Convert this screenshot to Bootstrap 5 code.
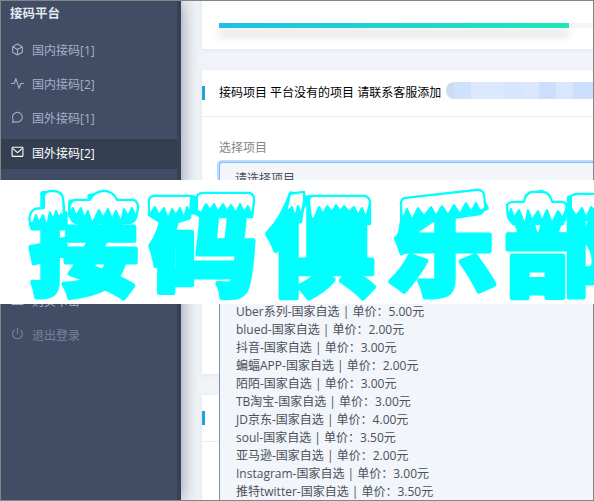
<!DOCTYPE html>
<html lang="zh-CN">
<head>
<meta charset="utf-8">
<meta name="viewport" content="width=device-width, initial-scale=1">
<title>接码平台</title>
<link rel="stylesheet" href="https://cdn.jsdelivr.net/npm/bootstrap@5.3.0/dist/css/bootstrap.min.css">
<style>
body{font:12px/18px "Open Sans","Noto Sans CJK SC",sans-serif;background:#f1f5f9;color:#4b5059}
.app{width:594px;height:501px}
.frame{inset:0;border:1px solid #858585;z-index:3;pointer-events:none}
.side{width:181px;background:#414d65;border-right:4px solid #364156;box-shadow:0 0 18px rgba(65,77,101,.6);z-index:1;color:#a6b1c8}
.brand{height:36px;padding:5px 0 0 10px;font-weight:700;color:#e4e9f2;font-size:12.5px}
.item{height:30px;margin-bottom:4.2px;padding-left:11px;gap:8px;color:#a6b1c8}
.item svg{width:13px;height:13px;fill:none;stroke:currentColor;stroke-width:2;stroke-linecap:round;stroke-linejoin:round;position:relative;top:-2px}
.item.current{background:#343e51;color:#fff}
.item.dim{color:#77839a}
.hidden-gap{height:114px}
.main{padding-left:21px}
.panel{background:#fff;box-shadow:0 1px 5px rgba(60,80,110,.08)}
.p-top{height:49px;padding:23px 0 0 17px}
.p-mid{height:304px;margin-top:21px}
.p-end{height:106px;margin-top:21px}
.track{height:5px;background:#f3f5f8;border-radius:0;overflow:visible}
.fill{width:350px;background:linear-gradient(90deg,#20bfe7,#1ee8b6);box-shadow:0 8px 8px rgba(0,0,0,.16)}
.head{height:47px;border-bottom:1px solid #eceef0;color:#000;padding-left:14px}
.head::before{content:"";width:3px;height:14px;background:#21a3dc;margin-left:-14px;margin-right:14px}
.masked{width:149px;height:17px;margin:-5px 0 0 5px;border-radius:8px 0 0 8px;background:linear-gradient(90deg,#cfdbf0 0 8px,#cfe1fd 8px 25px,#dbe8fe 25px 58px,#d7e5fe 58px 76px,#dae7ff 76px 93px,#cbdefe 93px 110px,#d9e6ff 110px 127px,#cddffe 127px)}
.fields{padding:22px 0 0 17px}
.fields label{color:#858585;margin-bottom:5px}
.picker{height:36px;font:inherit;color:#4b5059;background:#f2f5f9;border:1px solid #80bdff;border-right:0;border-radius:3px 0 0 3px;box-shadow:0 0 0 2px #b9dcff;padding:7px 0 0 15px}
.options{left:219px;right:0;top:303px;bottom:0;background:#f2f5f9;border-left:1px solid #7392b6;z-index:2;white-space:pre;padding-left:16px}
.banner{left:0;top:180px;width:594px;height:124px;background:#fff;z-index:4}
.banner text{font:900 109px "Noto Sans CJK SC",sans-serif;fill:#0ff;stroke:#0ff;stroke-width:5;stroke-linejoin:round}
.base path{fill:#0ff;stroke:#0ff;stroke-width:2.4;stroke-linejoin:round}
.snow path{fill:#fff;stroke:#0ff;stroke-width:2;stroke-linejoin:round}
</style>
</head>
<body>
<div class="app position-relative overflow-hidden d-flex">
  <nav class="side position-relative flex-shrink-0">
    <div class="brand">接码平台</div>
    <div>
      <a class="item d-flex align-items-center text-decoration-none" href="#"><svg viewBox="0 0 24 24"><path d="M12 2l9 5v10l-9 5-9-5V7zM3 7l9 5 9-5M12 12v10"/></svg><span>国内接码[1]</span></a>
      <a class="item d-flex align-items-center text-decoration-none" href="#"><svg viewBox="0 0 24 24"><path d="M1 12h5l3-9 6 18 3-9h5"/></svg><span>国内接码[2]</span></a>
      <a class="item d-flex align-items-center text-decoration-none" href="#"><svg viewBox="0 0 24 24"><path d="M3 21l1-5a9 9 0 1 1 5 4z"/></svg><span>国外接码[1]</span></a>
      <a class="item current d-flex align-items-center text-decoration-none" href="#"><svg viewBox="0 0 24 24"><rect x="2" y="4" width="20" height="17" rx="1"/><path d="M4 7l8 7 8-7"/></svg><span>国外接码[2]</span></a>
      <div class="hidden-gap"></div>
      <a class="item d-flex align-items-center text-decoration-none" href="#"><svg viewBox="0 0 24 24"><rect x="2" y="5" width="20" height="16"/></svg><span>购买卡密</span></a>
      <a class="item dim d-flex align-items-center text-decoration-none" href="#"><svg viewBox="0 0 24 24"><path d="M12 2v10M18 6a9 9 0 1 1-12 0"/></svg><span>退出登录</span></a>
    </div>
  </nav>
  <main class="main flex-grow-1">
    <section class="panel p-top"><div class="progress track"><div class="progress-bar fill"></div></div></section>
    <section class="panel p-mid">
      <div class="head d-flex align-items-center text-nowrap">接码项目 平台没有的项目 请联系客服添加<span class="masked flex-shrink-0"></span></div>
      <div class="fields"><label class="d-block">选择项目</label><div class="picker">请选择项目</div></div>
    </section>
    <section class="panel p-end"><div class="head d-flex align-items-center"></div></section>
  </main>
  <div class="options position-absolute"><div>Uber系列-国家自选 | 单价：5.00元</div><div>blued-国家自选 | 单价：2.00元</div><div>抖音-国家自选 | 单价：3.00元</div><div>蝙蝠APP-国家自选 | 单价：2.00元</div><div>陌陌-国家自选 | 单价：3.00元</div><div>TB淘宝-国家自选 | 单价：3.00元</div><div>JD京东-国家自选 | 单价：4.00元</div><div>soul-国家自选 | 单价：3.50元</div><div>亚马逊-国家自选 | 单价：2.00元</div><div>Instagram-国家自选 | 单价：3.00元</div><div>推特twitter-国家自选 | 单价：3.50元</div></div>
  <div class="frame position-absolute"></div>
  <svg class="banner position-absolute" viewBox="0 0 594 124">
    <text y="107" x="29 149 267 388 504">接码俱乐部</text>
    <g class="base">
      <path d="M30 43Q28 33 35 29L44 28V16Q45 11 53 11Q63 12 63 19L65 40Q64 47 56 48H35Q30 48 30 43Z"/>
      <path d="M70 34Q68 24 74 20H90Q94 12 103 11Q113 11 117 20H133Q138 21 138 28L136 38Q134 43 128 43H76Q71 42 70 34Z"/>
      <path d="M149 35V20Q150 16 155 16H191L190 38L178 42H160Z"/>
      <path d="M197 30V17Q198 13 204 13H249Q254 14 254 20L252 37H203Q197 37 197 30Z"/>
      <path d="M282 44L290 14L304 12V21L301 42Z"/>
      <path d="M311 44L309 20Q310 16 315 16H364Q370 17 370 23V44Z"/>
      <path d="M402 50L401 23Q402 18 406 18L477 10Q483 10 484 15L485 27Q484 32 480 34L433 41L420 50Z"/>
      <path d="M508 37L507 25Q509 22 515 22H524Q526 13 532 12H543Q550 13 552 22H563Q568 24 566 29L563 44H513Z"/>
      <path d="M571 40V17Q573 14 578 14H597V40Z"/>
    </g>
    <g class="snow">
      <path d="M30 43Q28 33 35 29L44 28V16Q45 11 53 11Q63 12 63 19L64 38L61 34L59 38L56 31L53 40L50 32L47 46L43 35L39 43L36 35L33 43Z"/>
      <path d="M70 34Q68 24 74 20H90Q94 12 103 11Q113 11 117 20H133Q138 21 138 28L136 37L132 28L128 36L124 29L121 42L116 31L112 39L108 29L103 38L99 30L92 44L88 31L84 38L81 28L76 36L73 28Z"/>
      <path d="M149 35V20Q150 16 155 16H191L190 34L187 27L184 38L180 28L176 35L172 29L168 39L164 28L159 35L155 27Z"/>
      <path d="M197 30V17Q198 13 204 13H249Q254 14 254 20L252 36L248 26L244 32L240 24L236 33L231 25L227 31L223 24L218 32L214 24L210 30L206 24L201 33Z"/>
      <path d="M286 33L290 14L304 12V21L301 35L298 26L295 37L292 27Z"/>
      <path d="M311 38L309 20Q310 16 315 16H364Q370 17 370 23L366 38L362 28L358 35L354 27L349 32L344 26L340 31L336 25L332 32L327 26L323 34L319 27L314 39Z"/>
      <path d="M402 41L401 23Q402 18 406 18L477 10Q483 10 484 15L485 27Q484 30 480 31L476 23L471 32L466 23L460 34L454 25L448 35L442 26L436 36L431 27L424 36L418 28L412 40L407 29Z"/>
      <path d="M508 37L507 25Q509 22 515 22H524Q526 13 532 12H543Q550 13 552 22H563Q568 24 566 29L563 38L558 31L552 43L547 30L542 41L538 31L532 40L528 30L525 45L519 30L514 38L511 29Z"/>
      <path d="M571 28V17Q573 14 578 14H597V33L591 27L586 38L582 28L576 36Z"/>
    </g>
  </svg>
</div>
<script src="https://cdn.jsdelivr.net/npm/bootstrap@5.3.0/dist/js/bootstrap.bundle.min.js"></script>
</body>
</html>
